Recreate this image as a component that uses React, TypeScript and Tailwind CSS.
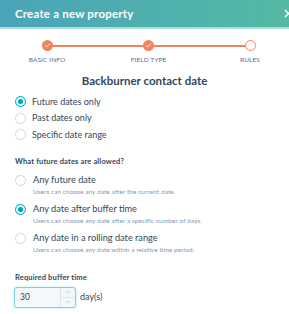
import { X, Check, ChevronUp, ChevronDown } from 'lucide-react'

const steps = [
  { label: 'BASIC INFO', done: true },
  { label: 'FIELD TYPE', done: true },
  { label: 'RULES', done: false },
]

function Radio({ checked }: { checked?: boolean }) {
  return (
    <span
      className={
        'flex h-[11px] w-[11px] shrink-0 items-center justify-center rounded-full border ' +
        (checked ? 'border-[#00a4bd] bg-[#e5f5f8]' : 'border-[#cbd6e2] bg-white')
      }
    >
      {checked && <span className="h-[5px] w-[5px] rounded-full bg-[#00a4bd]" />}
    </span>
  )
}

const ranges = ['Future dates only', 'Past dates only', 'Specific date range']

const futureOptions = [
  { title: 'Any future date', desc: 'Users can choose any date after the current date.' },
  { title: 'Any date after buffer time', desc: 'Users can choose any date after a specific number of days.', checked: true },
  { title: 'Any date in a rolling date range', desc: 'Users can choose any date within a relative time period.' },
]

export default function App() {
  return (
    <div className="h-[314px] w-[289px] overflow-hidden bg-white font-['Lato',sans-serif] text-[#33475b]">
      <div className="flex h-[29px] items-center justify-between border-b-2 border-[#a8e0dc] bg-gradient-to-r from-[#4aa4b9] to-[#55b9a3] pl-[15px] pr-0">
        <h1 className="text-[11.5px] font-bold tracking-[0.2px] text-white">Create a new property</h1>
        <X className="-mr-[6px] h-[13px] w-[13px] text-white" strokeWidth={2.5} />
      </div>

      <div className="relative mt-[11px] pl-[16px] pr-[8px]">
        <div className="absolute left-[47px] right-[39px] top-[5px] h-[1.5px] bg-[#f2845c]" />
        <div className="relative flex justify-between">
          {steps.map((s) => (
            <div key={s.label} className="flex w-[62px] flex-col items-center">
              {s.done ? (
                <span className="flex h-[11px] w-[11px] items-center justify-center rounded-full bg-[#f2845c]">
                  <Check className="h-[7px] w-[7px] text-white" strokeWidth={3} />
                </span>
              ) : (
                <span className="h-[11px] w-[11px] rounded-full border-[1.5px] border-[#f2845c] bg-white" />
              )}
              <span className="mt-[4px] text-[6.5px] tracking-[0.1px] text-[#516f90]">{s.label}</span>
            </div>
          ))}
        </div>
      </div>

      <h2 className="mt-[7px] text-center text-[11.5px] font-bold">Backburner contact date</h2>

      <div className="mt-[7px] flex flex-col gap-[5.5px] pl-[15px]">
        {ranges.map((r, i) => (
          <label key={r} className="flex h-[11px] items-center gap-[6px] text-[9px] text-[#33475b]">
            <Radio checked={i === 0} />
            {r}
          </label>
        ))}
      </div>

      <p className="mt-[16px] pl-[15px] text-[7.5px] font-bold tracking-[0.15px]">What future dates are allowed?</p>

      <div className="mt-[7px] flex flex-col gap-[7px] pl-[15px]">
        {futureOptions.map((o) => (
          <div key={o.title} className="flex items-start gap-[7px]">
            <div className="mt-[1px]">
              <Radio checked={o.checked} />
            </div>
            <div className="flex flex-col">
              <span className="text-[9.2px] leading-[12px]">{o.title}</span>
              <span className="mt-[1px] text-[6.4px] leading-[9px] tracking-[0.1px] text-[#7c98b6]">{o.desc}</span>
            </div>
          </div>
        ))}
      </div>

      <p className="mt-[18px] pl-[15px] text-[7.5px] font-bold tracking-[0.15px]">Required buffer time</p>

      <div className="mt-[3px] flex items-center gap-[4px] pl-[14px]">
        <div className="flex h-[21px] w-[62px] items-stretch rounded-[3px] border border-[#7fd1de] bg-[#f5f8fa] shadow-[0_0_3px_#b8e6ee]">
          <span className="flex flex-1 items-center pl-[5px] text-[8.5px]">30</span>
          <div className="flex w-[15px] flex-col border-l border-[#dfe3eb]">
            <span className="flex flex-1 items-center justify-center border-b border-[#dfe3eb]">
              <ChevronUp className="h-[6px] w-[6px] text-[#7fd1de]" strokeWidth={3} />
            </span>
            <span className="flex flex-1 items-center justify-center">
              <ChevronDown className="h-[6px] w-[6px] text-[#7fd1de]" strokeWidth={3} />
            </span>
          </div>
        </div>
        <span className="text-[9px]">day(s)</span>
      </div>
    </div>
  )
}
